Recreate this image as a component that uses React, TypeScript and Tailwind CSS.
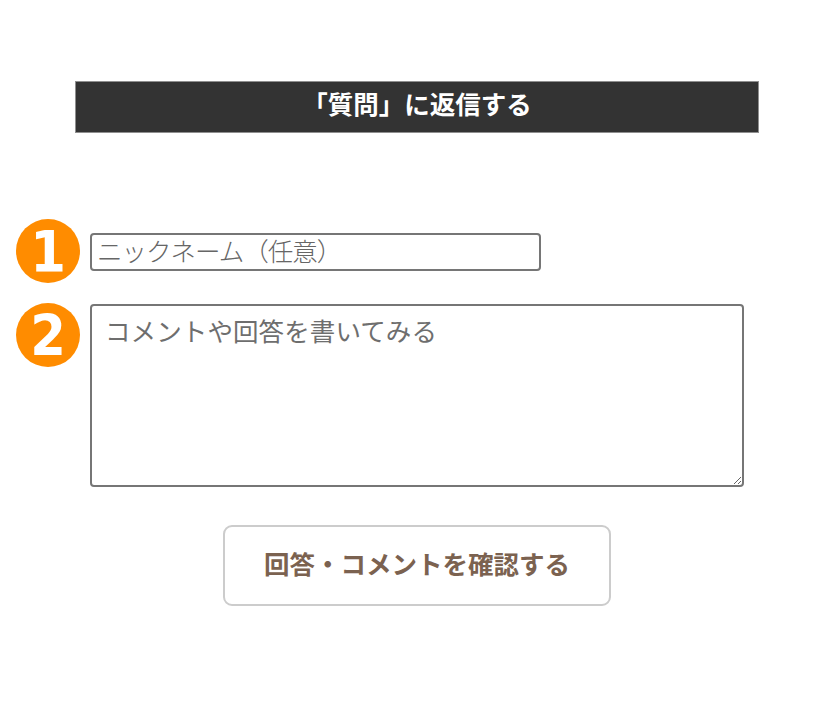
interface StepBadgeProps {
  step: number;
}

function StepBadge({ step }: StepBadgeProps) {
  return (
    <div className="flex h-16 w-16 shrink-0 items-center justify-center rounded-full bg-[#ff8c00] pt-0.5 font-['DejaVu_Sans_Condensed','DejaVu_Sans',sans-serif] text-[57px] leading-none font-bold text-white">
      {step}
    </div>
  );
}

function App() {
  return (
    <main className="h-[703px] w-[828px] overflow-hidden bg-white pt-[81px] font-['Noto_Sans_CJK_JP',sans-serif]">
      <h1 className="ml-[75px] h-[52px] w-[684px] border border-[#8f8f8f] bg-[#333333] text-center text-[25.5px] leading-[41px] font-bold text-white">
        「質問」に返信する
      </h1>

      <form>
        {/* Nickname */}
        <div className="mt-[86px] ml-4 flex items-start gap-2.5">
          <StepBadge step={1} />
          <input
            type="text"
            placeholder="ニックネーム（任意）"
            className="mt-3.5 h-[38px] w-[451px] rounded-[4px] border-2 border-[#767676] px-[5px] pb-1 text-[25.5px] font-light tracking-[-1px] placeholder:text-[#666666]"
          />
        </div>

        {/* Comment */}
        <div className="mt-5 ml-4 flex items-start gap-2.5">
          <StepBadge step={2} />
          <textarea
            placeholder="コメントや回答を書いてみる"
            className="mt-px h-[183px] w-[654px] resize rounded-[4px] border-2 border-[#767676] px-[13px] py-[5px] text-[25.5px] tracking-[0.1px] placeholder:text-[#6e6e6e]"
          />
        </div>

        <button
          type="button"
          className="mt-[38px] ml-[223px] block h-[81px] w-[388px] rounded-[9px] border-2 border-[#cccccc] pb-1 text-[25.5px] font-bold text-[#7b6250]"
        >
          回答・コメントを確認する
        </button>
      </form>
    </main>
  );
}

export default App;
